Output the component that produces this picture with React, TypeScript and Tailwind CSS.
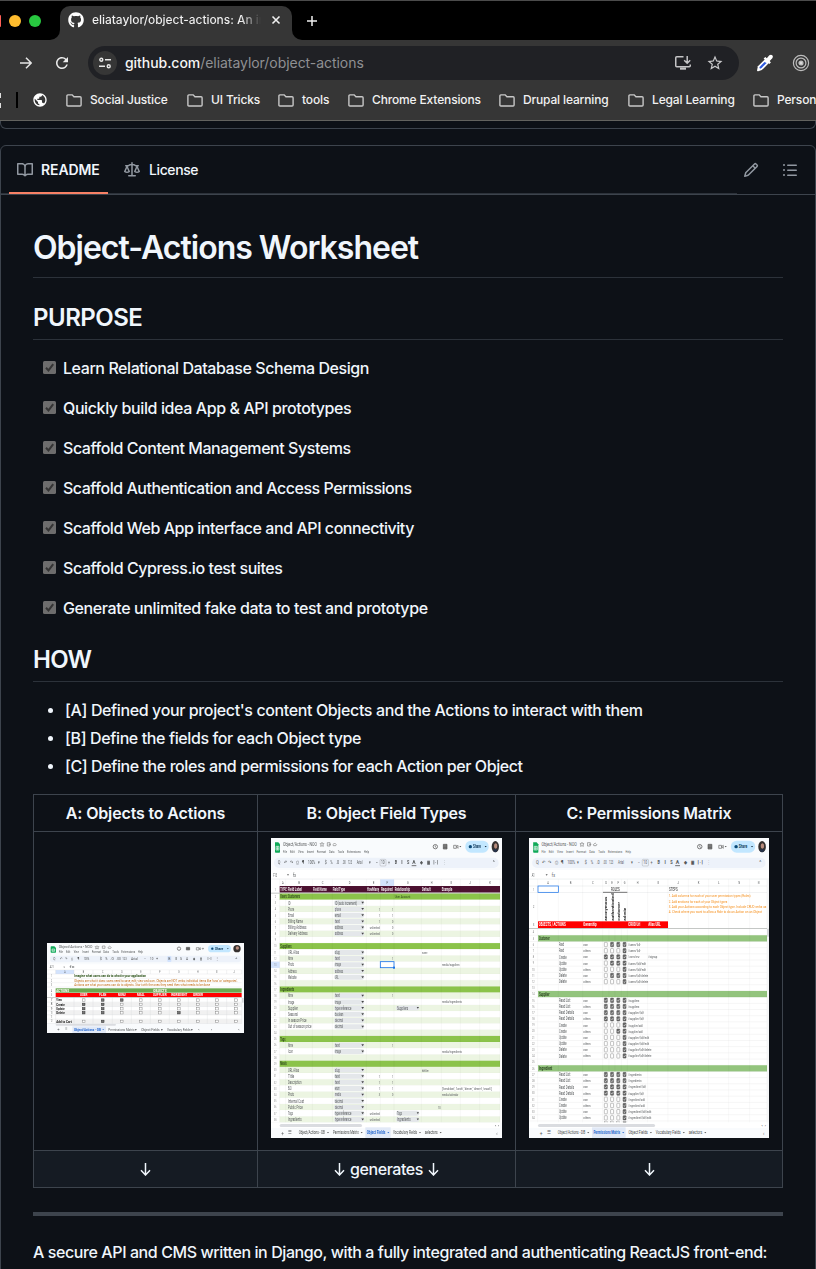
import React from "react";
import { FaGithub } from "react-icons/fa";
import { MdPublic, MdRefresh, MdStarBorder } from "react-icons/md";

/* ---------- Spreadsheet preview drawings ---------- */

type TProps = {
  x: number;
  y: number;
  w: number;
  s?: number;
  fill?: string;
  bold?: boolean;
  children: string;
};

function T({ x, y, w, s = 14, fill = "#55585a", bold, children }: TProps) {
  return (
    <text
      x={x}
      y={y + s * 0.38}
      fontSize={s * 1.08}
      fill={fill}
      fontWeight={bold ? 700 : 400}
      textLength={w}
      lengthAdjust="spacingAndGlyphs"
    >
      {children}
    </text>
  );
}

function SheetHeader() {
  return (
    <g>
      <rect x="18" y="18" width="693" height="124" fill="#f9fbfd" />
      <path d="M30 31h10l5 6v23q0 2-2 2H32q-2 0-2-2V33z" fill="#0fa958" />
      <path d="M33 43h9v11h-9zM33 48.500h9M37.500 43v11" fill="none" stroke="#fff" strokeWidth="1.800" />
      <T x={54} y={36} w={102} s={15}>Object/Actions - NOO</T>
      <path d="M171 31l2 4h4l-3 3 1 5-4-2-4 2 1-5-3-3h4zM187 32h8v10h-8zM191 37h7M205 41q-3-4 1-5 3-6 6 0 4 2 0 5z" fill="none" stroke="#666" strokeWidth="1.600" />
      {[
        ["File", 54, 12], ["Edit", 75, 14], ["View", 99, 17], ["Insert", 125, 22], ["Format", 155, 28],
        ["Data", 192, 16], ["Tools", 218, 19], ["Extensions", 246, 41], ["Help", 297, 15],
      ].map(([t, x, w]) => (
        <T key={t as string} x={x as number} y={58} w={w as number} s={12}>{t as string}</T>
      ))}
      <circle cx="511" cy="44" r="6.500" fill="none" stroke="#666" strokeWidth="2.500" />
      <path d="M511 40v5l3 2" fill="none" stroke="#666" strokeWidth="2" />
      <path d="M535 37h11v14h-11zM535 42h11M535 47h11" fill="#888" stroke="#555" strokeWidth="2" />
      <path d="M566 40h8v9h-8zM574 44l5-4v9z" fill="none" stroke="#666" strokeWidth="2" />
      <path d="M583 42h6l-3 4z" fill="#555" />
      <rect x="601" y="26" width="70" height="36" rx="17" fill="#c2e7ff" />
      <circle cx="616" cy="44" r="5" fill="#0b4a78" />
      <T x={624} y={44} w={24} s={14} fill="#0b3556" bold>Share</T>
      <path d="M659 42h6l-3 4z" fill="#123" />
      <ellipse cx="691" cy="44" rx="11" ry="17" fill="#35302f" />
      <ellipse cx="692" cy="42" rx="5" ry="8" fill="#b78b7b" />
      <path d="M684 54q7-6 14 0-3 7-7 7-5 0-7-7z" fill="#26334a" />
      <rect x="27" y="77" width="674" height="31" rx="15" fill="#edf2fa" />
      {[
        ["Q", 38, 8], ["↶", 57, 9], ["↷", 74, 9], ["⎙", 92, 9], ["¶", 110, 8], ["100%", 129, 22], ["▾", 158, 6],
        ["$", 179, 6], ["%", 196, 7], [".0", 213, 9], [".00", 232, 10], ["123", 249, 12], ["Arial", 275, 17],
        ["▾", 313, 6], ["−", 333, 6], ["10", 348, 11], ["+", 369, 6], ["B", 389, 7], ["I", 409, 4],
        ["S", 426, 7], ["A", 442, 10], ["◆", 465, 9], ["▦", 485, 10], ["|·|", 504, 17], ["⋮", 536, 4], ["^", 683, 6],
      ].map(([t, x, w], i) => (
        <T key={i} x={x as number} y={92} w={w as number} s={14} bold={i > 16 && i < 23}>{t as string}</T>
      ))}
      <rect x="345" y="82" width="18" height="20" rx="3" fill="none" stroke="#8b8f94" />
      <path d="M440 101h14" stroke="#333" strokeWidth="2" />
      <rect x="18" y="114" width="693" height="28" fill="#fff" />
      <path d="M18 141h693" stroke="#d5d8db" />
      <path d="M66 127h6l-3 4z" fill="#555" />
      <T x={84} y={129} w={9} s={14}>fx</T>
    </g>
  );
}

function SheetFooter({ active }: { active: number }) {
  const tabs: [string, number, number][] = [
    ["Object/Actions - DB", 101, 79],
    ["Permissions Matrix", 204, 77],
    ["Object Fields", 305, 56],
    ["Vocabulary Fields", 384, 72],
    ["selectors", 479, 39],
  ];
  return (
    <g>
      <rect x="18" y="872" width="693" height="46" fill="#f9fbfd" />
      <rect x="18" y="872" width="687" height="16" fill="#fff" />
      <rect x="44" y="876" width={active === 2 ? 247 : 338} height="9" rx="4.500" fill="#dadce0" />
      <T x={689} y={880} w={14} s={10}>‹ ›</T>
      <T x={49} y={902} w={8} s={16}>+</T>
      <T x={70} y={902} w={10} s={14}>☰</T>
      {tabs.map(([t, x, w], i) => (
        <g key={t}>
          {i === active && <rect x={x - 4} y="886" width={w + 20} height="32" fill="#e1e9f7" />}
          <T x={x} y={902} w={w} s={14} bold={i === active} fill={i === active ? "#2668cf" : "#444746"}>{t}</T>
          <path d={`M${x + w + 6} 900h6l-3 4z`} fill={i === active ? "#2668cf" : "#555"} />
        </g>
      ))}
      <T x={694} y={904} w={4} s={14}>‹</T>
    </g>
  );
}

const fieldCols = [44, 62, 142, 202, 304, 346, 387, 469, 529, 586, 644, 705];

const fieldRows: Record<number, { n: string; t: string; e?: string; f?: string; g?: string; h?: string; i?: string }> = {
  3: { n: "ID", t: "ID (auto increment)" },
  4: { n: "Phone", t: "phone", e: "1", f: "1" },
  5: { n: "Email", t: "email", e: "1", f: "1" },
  6: { n: "Billing Name", t: "text", e: "1", f: "0" },
  7: { n: "Billing Address", t: "address", e: "unlimited", f: "0" },
  8: { n: "Delivery Address", t: "address", e: "unlimited", f: "0" },
  11: { n: "URL Alias", t: "slug", h: "name" },
  12: { n: "Name", t: "text", f: "1" },
  13: { n: "Photo", t: "image", i: "media/suppliers" },
  14: { n: "Address", t: "address" },
  15: { n: "Website", t: "URL" },
  18: { n: "Name", t: "text", f: "1" },
  19: { n: "Image", t: "image", i: "media/ingredients" },
  20: { n: "Supplier", t: "type reference", g: "Suppliers" },
  21: { n: "Seasonal", t: "boolean" },
  22: { n: "In season Price", t: "decimal" },
  23: { n: "Out of season price", t: "decimal" },
  26: { n: "Name", t: "text", f: "1" },
  27: { n: "Icon", t: "image", i: "media/ingredients" },
  30: { n: "URL Alias", t: "slug", h: "title" },
  31: { n: "Title", t: "text", e: "1", f: "1" },
  32: { n: "Description", t: "text", e: "1", f: "1" },
  33: { n: "BLD", t: "enum", e: "1", f: "1", i: "['breakfast', 'lunch', 'dinner', 'desert', 'snack']" },
  34: { n: "Photo", t: "media", e: "3", f: "0", i: "media/calendar" },
  35: { n: "Internal Cost", t: "decimal" },
  36: { n: "Public Price", t: "decimal", h: "10" },
  37: { n: "Tags", t: "type reference", e: "unlimited", g: "Tags" },
  38: { n: "Ingredients", t: "type reference", e: "unlimited", g: "Ingredients" },
};

const fieldHeads: Record<number, string> = { 2: "Users: Customers", 10: "Suppliers", 17: "Ingredients", 25: "Tags", 29: "Meals" };

function FieldTypesSheet() {
  const cy = (n: number) => 194 + (n - 2) * 18.57;
  const rows = Array.from({ length: 37 }, (_, i) => i + 2);
  return (
    <svg viewBox="18 18 693 900" preserveAspectRatio="none" className="block h-[300px] w-[231px] font-['Roboto',sans-serif] blur-[0.3px]">
      <rect x="18" y="18" width="693" height="900" fill="#fff" />
      <SheetHeader />
      <T x={25} y={129} w={11} s={13}>F13</T>
      <rect x="346" y="142" width="41" height="20" fill="#d3e3fd" />
      {"ABCDEFGHIJK".split("").map((c, i) => (
        <T key={c} x={(fieldCols[i] + fieldCols[i + 1]) / 2 - 2} y={151} w={5} s={12}>{c}</T>
      ))}
      <rect x="44" y="162" width="661" height="20" fill="#4c1130" />
      <T x={29} y={172} w={3} s={11}>1</T>
      {[
        ["TYPE", 46, 19], ["Field Label", 68, 43], ["Field Name", 144, 41], ["Field Type", 203, 37], ["HowMany", 306, 36],
        ["Required", 348, 35], ["Relationship", 389, 46], ["Default", 471, 26], ["Example", 530, 32],
      ].map(([t, x, w]) => (
        <T key={t as string} x={x as number} y={172} w={w as number} s={13} fill="#f2ecef" bold>{t as string}</T>
      ))}
      <rect x="18" y="182" width="687" height="3" fill="#c4c7c5" />
      {rows.map((n) => {
        const y = cy(n);
        const r = fieldRows[n];
        const head = fieldHeads[n];
        return (
          <g key={n}>
            <rect x="44" y={y - 9.3} width="661" height="18.6" fill={head ? "#8bc34a" : n % 2 === 0 ? "#ecf5e2" : "#fff"} />
            {n === 13 && <rect x="18" y={y - 9.3} width="26" height="18.6" fill="#d3e3fd" />}
            <T x={n < 10 ? 29 : 27} y={y} w={n < 10 ? 4 : 7} s={10} fill="#888">{String(n)}</T>
            {head && <T x={46} y={y} w={n === 2 ? 59 : head.length * 3.8} s={13} fill="#2f4a1b" bold>{head}</T>}
            {n === 2 && <T x={389} y={y} w={47} s={12} fill="#2c4a18">User Account</T>}
            {r && (
              <g>
                <T x={69} y={y} w={r.n.length * 3.7} s={13}>{r.n}</T>
                <rect x="207" y={y - 7.5} width="91" height="15" rx="7" fill="#e4e7ea" />
                <T x={210} y={y} w={r.t.length * 3.5} s={13}>{r.t}</T>
                <path d={`M289 ${y - 3}h8l-4 6z`} fill="#444" />
                {r.e && <T x={r.e.length > 1 ? 314 : 341} y={y} w={r.e.length > 1 ? 31 : 4} s={12}>{r.e}</T>}
                {r.f && <T x={381} y={y} w={4} s={12}>{r.f}</T>}
                {r.g && (
                  <g>
                    <rect x="393" y={y - 7.5} width="70" height="15" rx="7" fill="#e4e7ea" />
                    <T x={396} y={y} w={r.g.length * 3.7} s={13}>{r.g}</T>
                    <path d={`M455 ${y - 3}h7l-3.500 5z`} fill="#444" />
                  </g>
                )}
                {r.h && <T x={n === 36 ? 519 : 471} y={y} w={r.h.length * 4} s={12}>{r.h}</T>}
                {r.i && <T x={531} y={y} w={n === 33 ? 149 : r.i.length * 3.5} s={12}>{r.i}</T>}
              </g>
            )}
            <path d={`M18 ${y + 9.3}H705`} stroke="#000" strokeOpacity="0.08" />
          </g>
        );
      })}
      {fieldCols.map((x) => (
        <path key={x} d={`M${x} 142V872`} stroke="#000" strokeOpacity="0.1" />
      ))}
      <rect x="346" y="389" width="41" height="18" fill="#fff" stroke="#1a73e8" strokeWidth="2.500" />
      <rect x="384" y="404" width="6" height="6" fill="#1a73e8" />
      <SheetFooter active={2} />
    </svg>
  );
}

const permCols = [47, 109, 182, 242, 261, 279, 298, 316, 377, 438, 499, 560, 620, 683, 735];

const permRows: Record<number, [string, string, string, string]> = {
  6: ["Read", "own", "0111", "/users/{id}"],
  7: ["Read", "others", "0001", "/users/{id}"],
  8: ["Create", "own", "1111", "/users/new"],
  9: ["Update", "own", "0111", "/users/{id}/edit"],
  10: ["Update", "others", "0001", "/users/{id}/edit"],
  11: ["Delete", "own", "0111", "/users/{id}/delete"],
  12: ["Delete", "others", "0001", "/users/{id}/delete"],
  15: ["Read List", "own", "1111", "/suppliers"],
  16: ["Read List", "others", "1111", "/suppliers"],
  17: ["Read Details", "own", "1111", "/supplier/{id}"],
  18: ["Read Details", "others", "1111", "/supplier/{id}"],
  19: ["Create", "own", "0001", "/supplier/add"],
  20: ["Create", "others", "0011", "/supplier/add"],
  21: ["Update", "own", "0001", "/supplier/{id}/edit"],
  22: ["Update", "others", "0001", "/supplier/{id}/edit"],
  23: ["Delete", "own", "0001", "/supplier/{id}/delete"],
  24: ["Delete", "others", "0001", "/supplier/{id}/delete"],
  27: ["Read List", "own", "1111", "/ingredients"],
  28: ["Read List", "others", "1111", "/ingredients"],
  29: ["Read Details", "own", "1111", "/ingredient/{id}"],
  30: ["Read Details", "others", "1111", "/supplier/{id}"],
  31: ["Create", "own", "0001", "/ingredient/add"],
  32: ["Create", "others", "0001", "/ingredient/add"],
  33: ["Update", "own", "0001", "/ingredient/{id}/edit"],
  34: ["Update", "others", "0001", "/ingredient/{id}/edit"],
};

const permHeads: Record<number, string> = { 5: "Customer", 14: "Supplier", 26: "Ingredient" };

function PermissionsSheet() {
  const cy = (n: number) => 319 + (n - 5) * 18.57;
  const rows = Array.from({ length: 31 }, (_, i) => i + 4);
  return (
    <svg viewBox="21 18 720 900" preserveAspectRatio="none" className="block h-[300px] w-[240px] font-['Roboto',sans-serif] blur-[0.3px]">
      <rect x="21" y="18" width="720" height="900" fill="#fff" />
      <g transform="translate(2.300 0) scale(1.03896 1)">
        <SheetHeader />
      </g>
      <T x={29} y={129} w={9} s={13}>A1</T>
      {permCols.slice(0, -1).map((x, i) => (
        <T key={x} x={(x + permCols[i + 1]) / 2 - 2} y={151} w={5} s={12}>{"ABCDEFGHIJKLMN"[i]}</T>
      ))}
      <path d="M21 162H735M21 181.500H735" stroke="#d9dbdd" />
      <rect x="48" y="268" width="390" height="20" fill="#f00" />
      {[
        ["OBJECTS / ACTIONS", 50, 81], ["Ownership", 184, 40], ["CRUD Url", 319, 36], ["Alias URL", 379, 37],
      ].map(([t, x, w]) => (
        <T key={t as string} x={x as number} y={278} w={w as number} s={13} fill="#fff" bold>{t as string}</T>
      ))}
      <T x={33} y={172} w={3} s={11}>1</T>
      <T x={33} y={224} w={4} s={11}>2</T>
      <T x={33} y={278} w={4} s={11}>3</T>
      <T x={267} y={172} w={26} s={14} fill="#222">ROLES</T>
      <path d="M243 181H316" stroke="#333" strokeWidth="2" />
      {[
        ["anonymous", 251, 72], ["authenticated", 270, 82], ["customer", 289, 56], ["admin", 307, 39],
      ].map(([t, x, w]) => (
        <g key={t as string} transform={`translate(${x} 266) rotate(-90)`}>
          <T x={0} y={0} w={w as number} s={12} fill="#222" bold>{t as string}</T>
        </g>
      ))}
      <T x={441} y={172} w={26} s={13} fill="#333">STEPS</T>
      <T x={440} y={191} w={246} s={12} fill="#f59120">1. Add columns for each of your user permission types (Roles)</T>
      <T x={440} y={207} w={176} s={12} fill="#f59120">2. Add sections for each of your Object types</T>
      <T x={440} y={223} w={293} s={12} fill="#f59120">3. Add your Actions according to each Object type. Include CRUD verbs as</T>
      <T x={440} y={239} w={280} s={12} fill="#f59120">4. Check where you want to allow a Role to do an Action on an Object</T>
      {rows.map((n) => {
        const y = cy(n);
        const r = permRows[n];
        const head = permHeads[n];
        return (
          <g key={n}>
            {head && <rect x="48" y={y - 9.3} width="687" height="18.6" fill="#93c47d" />}
            {head && <T x={51} y={y} w={head.length * 4} s={13} fill="#2b4420" bold>{head}</T>}
            <T x={n < 10 ? 32 : 30} y={y} w={n < 10 ? 4 : 8} s={10} fill="#888">{String(n)}</T>
            {r && (
              <g>
                <T x={111} y={y} w={r[0].length * 3.8} s={13}>{r[0]}</T>
                <T x={184} y={y} w={r[1].length === 3 ? 14 : 22} s={12}>{r[1]}</T>
                {r[2].split("").map((c, i) => (
                  <g key={i}>
                    <rect x={247 + i * 18.7} y={y - 6.5} width="9" height="13" rx="1.500" fill={c === "1" ? "#666" : "#fff"} stroke={c === "1" ? "#555" : "#888"} strokeWidth="1.500" />
                    {c === "1" && <path d={`M249 ${y}l2 3 4-6`} transform={`translate(${i * 18.7} 0)`} fill="none" stroke="#fff" strokeWidth="1.500" />}
                  </g>
                ))}
                <T x={319} y={y} w={r[3].length * 3.3} s={12}>{r[3]}</T>
                {n === 8 && <T x={379} y={y} w={27} s={12}>/signup</T>}
              </g>
            )}
            <path d={`M21 ${y + 9.3}H735`} stroke="#000" strokeOpacity="0.12" />
          </g>
        );
      })}
      {[0, 1, 2, 3].map((i) => (
        <rect key={i} x={247 + i * 18.7} y="869" width="9" height="4" fill={i === 3 ? "#666" : "#fff"} stroke="#888" />
      ))}
      {permCols.map((x) => (
        <path key={x} d={x > 242 && x < 316 ? `M${x} 142V161M${x} 290V872` : `M${x} 142V872`} stroke="#000" strokeOpacity="0.1" />
      ))}
      <rect x="21" y="288" width="714" height="3" fill="#c4c7c5" />
      <rect x="48" y="162" width="61" height="19" fill="#fff" stroke="#1a73e8" strokeWidth="2.200" />
      <rect x="735" y="142" width="6" height="730" fill="#f5f6f7" />
      <rect x="735" y="290" width="6" height="24" fill="#d5d7da" />
      <g transform="translate(2.300 0) scale(1.03896 1)">
        <SheetFooter active={1} />
      </g>
    </svg>
  );
}

function ActionsSheet() {
  const cols = [47, 102, 159, 217, 274, 331, 388, 445, 502, 560, 605];
  const rows: [string, number, string][] = [
    ["View", 195, "011000000"],
    ["Create", 208, "110000000"],
    ["Update", 221, "110000000"],
    ["Delete", 233, "110001000"],
    ["", 246, ""],
    ["Add to Cart", 259, "010000000"],
  ];
  return (
    <svg viewBox="21 24 591 270" preserveAspectRatio="none" className="block h-[90px] w-[197px] font-['Roboto',sans-serif] blur-[0.3px]">
      <rect x="21" y="24" width="591" height="270" fill="#f9fbfd" />
      <path d="M34 34h9l5 5v12q0 2-2 2H34q-2 0-2-2V36q0-2 2-2z" fill="#0fa958" />
      <path d="M36 42h8v7h-8zM36 45.500h8" fill="none" stroke="#fff" strokeWidth="1.600" />
      <T x={56} y={36} w={101} s={11}>Object/Actions - NOO</T>
      <path d="M171 32l2 3h4l-3 3 1 4-4-2-4 2 1-4-3-3h4zM187 33h8v7h-8zM205 40q-3-3 1-4 3-5 6 0 4 1 0 4z" fill="none" stroke="#666" strokeWidth="1.500" />
      {[
        ["File", 56, 13], ["Edit", 78, 13], ["View", 101, 16], ["Insert", 127, 20], ["Format", 155, 28],
        ["Data", 190, 17], ["Tools", 217, 20], ["Extensions", 244, 42], ["Help", 294, 15],
      ].map(([t, x, w]) => (
        <T key={t as string} x={x as number} y={49.5} w={w as number} s={8.5}>{t as string}</T>
      ))}
      <circle cx="417" cy="41" r="5" fill="none" stroke="#555" strokeWidth="2" />
      <path d="M439 37h10v8h-10zM439 41h10" fill="#777" stroke="#444" strokeWidth="1.500" />
      <path d="M469 38h8v7h-8zM477 41l4-3v7zM486 40h5l-2.500 3z" fill="none" stroke="#555" strokeWidth="1.500" />
      <rect x="504" y="30" width="69" height="22" rx="11" fill="#c2e7ff" />
      <circle cx="517" cy="41" r="3.500" fill="#0b4a78" />
      <T x={525} y={41} w={25} s={10} fill="#0b3556" bold>Share</T>
      <path d="M561 40h5l-2.500 3z" fill="#123" />
      <circle cx="591" cy="41" r="11" fill="#35302f" />
      <circle cx="592" cy="39" r="5" fill="#b78b7b" />
      <rect x="30" y="62" width="573" height="20" rx="10" fill="#edf2fa" />
      <rect x="382" y="63" width="12" height="18" rx="3" fill="#d3e3fd" />
      {[
        ["Q", 40], ["↶", 60], ["↷", 76], ["⎙", 94], ["¶", 112], ["100%", 131], ["$", 179], ["%", 196], [".0", 211], [".00", 229],
        ["123", 247], ["Arial", 273], ["−", 311], ["10", 330], ["+", 348], ["B", 385], ["I", 405], ["S", 420], ["A", 438],
        ["◆", 459], ["▦", 479], ["|·|", 502], ["⋮", 529], ["^", 586],
      ].map(([t, x], i) => (
        <T key={i} x={x as number} y={72} w={(t as string).length * 3.5 + 3} s={10}>{t as string}</T>
      ))}
      <rect x="21" y="88" width="585" height="178" fill="#fff" />
      <T x={29} y={96} w={12} s={8}>A21</T>
      <path d="M70 95h5l-2.500 3z" fill="#555" />
      <T x={88} y={96} w={16} s={8}>fx</T>
      <rect x="47" y="105" width="55" height="12" fill="#d3e3fd" />
      {cols.slice(0, -1).map((x, i) => (
        <T key={x} x={(x + cols[i + 1]) / 2 - 2} y={111} w={4} s={8}>{"ABCDEFGHIJ"[i]}</T>
      ))}
      <path d="M21 104.500H605M21 117H605M21 130H605M21 143H605M21 156H605" stroke="#dddfe1" />
      <T x={33} y={124} w={3} s={8}>1</T>
      <T x={33} y={137} w={3} s={8}>2</T>
      <T x={33} y={150} w={3} s={8}>3</T>
      <T x={103} y={124} w={215} s={9} fill="#274e13" bold>Imagine what users can do to what in your application</T>
      <T x={103} y={137} w={490} s={9} fill="#c06a16">Objects are what it does: users need to save, edit, view and own. Objects are NOT verbs; individual items like 'tuna' or 'categories'.</T>
      <T x={103} y={150} w={407} s={9} fill="#c06a16">Actions are what your users can do to objects. Start with the ones they need then what needs to be done</T>
      <rect x="47" y="160" width="558" height="13" fill="#6aa84f" />
      <rect x="47" y="174" width="558" height="12" fill="#f00" />
      <T x={49} y={166.5} w={38} s={10} fill="#fff" bold>ACTIONS</T>
      <T x={340} y={166.5} w={40} s={10} fill="#fff" bold>OBJECTS</T>
      {[
        ["USER", 120, 22], ["PLAN", 177, 22], ["MENU", 234, 23], ["MEAL", 291, 23], ["SUPPLIER", 339, 41],
        ["INGREDIENT", 393, 49], ["ORDER", 459, 30],
      ].map(([t, x, w]) => (
        <T key={t as string} x={x as number} y={180} w={w as number} s={9} fill="#fff" bold>{t as string}</T>
      ))}
      <T x={33} y={167} w={3} s={8}>4</T>
      <T x={33} y={180} w={3} s={8}>5</T>
      {rows.map(([name, y, marks], r) => (
        <g key={r}>
          {r % 2 === 1 && <rect x="47" y={y - 6.4} width="558" height="12.8" fill="#f1f1f1" />}
          <T x={32} y={y} w={5} s={8}>{String(r + 7)}</T>
          {name && <T x={49} y={y} w={name.length * 4.2} s={10} fill="#111" bold>{name}</T>}
          {marks.split("").map((c, i) => (
            <rect key={i} x={127 + i * 57.1} y={y - 3.5} width="8" height="7.5" fill={c === "1" ? "#777" : "#fff"} stroke={c === "1" ? "#333" : "#888"} strokeWidth="1.5" />
          ))}
          <path d={`M21 ${y + 6.4}H605`} stroke="#d9dbdd" />
        </g>
      ))}
      {cols.map((x) => (
        <path key={x} d={`M${x} 105V117M${x} 187V266`} stroke="#d5d7da" />
      ))}
      <rect x="21" y="186.500" width="585" height="2.500" fill="#c4c7c5" />
      <rect x="606" y="189" width="5" height="14" fill="#d5d7da" />
      <rect x="47" y="267" width="181" height="5" rx="2.500" fill="#dadce0" />
      <rect x="97" y="274" width="101" height="20" fill="#e1e9f7" />
      <T x={52} y={283} w={7} s={10}>+</T>
      <T x={75} y={283} w={8} s={9}>☰</T>
      <T x={102} y={283} w={81} s={10} fill="#2668cf" bold>Object/Actions - DB</T>
      <path d="M187 282h5l-2.500 3z" fill="#2668cf" />
      <T x={205} y={283} w={86} s={10}>Permissions Matrix ▾</T>
      <T x={304} y={283} w={63} s={10}>Object Fields ▾</T>
      <T x={381} y={283} w={78} s={10}>Vocabulary Fields ▾</T>
      <T x={474} y={283} w={5} s={10}>‹</T>
      <T x={512} y={283} w={5} s={10}>›</T>
      <T x={594} y={283} w={5} s={10}>‹</T>
    </svg>
  );
}

/* ---------- Icons ---------- */

const glyphs = {
  book: "M0 1.75A.75.75 0 0 1 .75 1h4.253c1.227 0 2.317.59 3 1.501A3.743 3.743 0 0 1 11.006 1h4.245a.75.75 0 0 1 .75.75v10.5a.75.75 0 0 1-.75.75h-4.507a2.25 2.25 0 0 0-1.591.659l-.622.621a.75.75 0 0 1-1.06 0l-.622-.621A2.25 2.25 0 0 0 5.258 13H.75a.75.75 0 0 1-.75-.75Zm7.251 10.324.004-5.073-.002-2.253A2.25 2.25 0 0 0 5.003 2.5H1.5v9h3.757a3.75 3.75 0 0 1 1.994.574ZM8.755 4.75l-.004 7.322a3.752 3.752 0 0 1 1.992-.572H14.5v-9h-3.495a2.25 2.25 0 0 0-2.25 2.25Z",
  law: "M8.75.75V2h.985c.304 0 .603.08.867.231l1.29.736c.038.022.08.033.124.033h2.234a.75.75 0 0 1 0 1.5h-.427l2.111 4.692a.75.75 0 0 1-.154.838l-.53-.53.529.531-.001.002-.002.002-.006.006-.006.005-.01.01-.045.04c-.21.176-.441.327-.686.45C14.556 10.78 13.88 11 13 11a4.498 4.498 0 0 1-2.023-.454 3.544 3.544 0 0 1-.686-.45l-.045-.04-.016-.015-.006-.006-.004-.004v-.001a.75.75 0 0 1-.154-.838L12.178 4.5h-.162c-.305 0-.604-.079-.868-.231l-1.29-.736a.245.245 0 0 0-.124-.033H8.75V13h2.5a.75.75 0 0 1 0 1.5h-6.5a.75.75 0 0 1 0-1.5h2.5V3.5h-.984a.245.245 0 0 0-.124.033l-1.289.737c-.265.15-.564.23-.869.23h-.162l2.112 4.692a.75.75 0 0 1-.154.838l-.53-.53.529.531-.001.002-.002.002-.006.006-.016.015-.045.04c-.21.176-.441.327-.686.45C4.556 10.78 3.88 11 3 11a4.498 4.498 0 0 1-2.023-.454 3.544 3.544 0 0 1-.686-.45l-.045-.04-.016-.015-.006-.006-.004-.004v-.001a.75.75 0 0 1-.154-.838L2.178 4.5H1.75a.75.75 0 0 1 0-1.5h2.234a.249.249 0 0 0 .125-.033l1.288-.737c.265-.15.564-.23.869-.23h.984V.75a.75.75 0 0 1 1.5 0Zm2.945 8.477c.285.135.718.273 1.305.273s1.02-.138 1.305-.273L13 6.327Zm-10 0c.285.135.718.273 1.305.273s1.02-.138 1.305-.273L3 6.327Z",
  pencil: "M11.013 1.427a1.75 1.75 0 0 1 2.474 0l1.086 1.086a1.75 1.75 0 0 1 0 2.474l-8.61 8.61c-.21.21-.47.364-.756.445l-3.251.93a.75.75 0 0 1-.927-.928l.929-3.25c.081-.286.235-.547.445-.758l8.61-8.61Zm.176 4.823L9.75 4.81l-6.286 6.287a.253.253 0 0 0-.064.108l-.558 1.953 1.953-.558a.253.253 0 0 0 .108-.064Zm1.238-3.763a.25.25 0 0 0-.354 0L10.811 3.75l1.439 1.44 1.263-1.263a.25.25 0 0 0 0-.354Z",
  list: "M5.75 2.5h8.5a.75.75 0 0 1 0 1.5h-8.5a.75.75 0 0 1 0-1.5Zm0 5h8.5a.75.75 0 0 1 0 1.5h-8.5a.75.75 0 0 1 0-1.5Zm0 5h8.5a.75.75 0 0 1 0 1.5h-8.5a.75.75 0 0 1 0-1.5ZM2 14a1 1 0 1 1 0-2 1 1 0 0 1 0 2Zm1-6a1 1 0 1 1-2 0 1 1 0 0 1 2 0ZM2 4a1 1 0 1 1 0-2 1 1 0 0 1 0 2Z",
};

function Icon({ name, className = "" }: { name: keyof typeof glyphs; className?: string }) {
  return (
    <svg viewBox="0 0 16 16" fill="currentColor" className={`size-4 shrink-0 text-[#9198a1] ${className}`}>
      <path d={glyphs[name]} />
    </svg>
  );
}

/* ---------- Browser chrome ---------- */

function FolderIcon() {
  return (
    <svg viewBox="0 0 16 13" className="h-[13px] w-4 shrink-0" fill="none" stroke="#c7c7c7" strokeWidth="1.4">
      <path d="M1.900.900h4.300l1.700 1.900h6.200q1 0 1 1v7.200q0 1-1 1H1.900q-1 0-1-1V1.900q0-1 1-1z" />
    </svg>
  );
}

const bookmarks: { name: string; box: string }[] = [
  { name: "Social Justice", box: "w-[121px]" },
  { name: "UI Tricks", box: "w-[91px]" },
  { name: "tools", box: "w-[70px]" },
  { name: "Chrome Extensions", box: "w-[151px]" },
  { name: "Drupal learning", box: "w-[129px]" },
  { name: "Legal Learning", box: "w-[125px]" },
  { name: "Person", box: "w-[63px]" },
];

function TabStrip() {
  return (
    <div className="flex h-10 bg-[#363636]">
      <div className="flex w-[60px] items-center rounded-br-[10px] border-t border-[#4b4b4b] bg-black">
        <span className="h-3 w-px rounded-r-full bg-[#ff5f57]" />
        <span className="ml-2 size-3 rounded-full bg-[#febc2e]" />
        <span className="ml-2 size-3 rounded-full bg-[#28c840]" />
      </div>
      <div className="w-[232px] border-t border-[#4b4b4b] bg-black pt-[5px]">
        <div className="flex h-[34px] items-center rounded-t-[10px] bg-[#363636] pb-[6px] pl-2">
          <FaGithub className="size-4 shrink-0 text-white" />
          <span className="ml-2 w-[169px] overflow-hidden whitespace-nowrap bg-gradient-to-r from-[#f2f2f2] from-[88%] to-transparent bg-clip-text text-[12px] font-medium leading-4 tracking-[-0.05px] text-transparent">
            eliataylor/object-actions: An in
          </span>
          <svg viewBox="0 0 10 10" className="ml-[10px] size-[10px]" stroke="#f0f0f0" strokeWidth="1.6">
            <path d="M1.500 1.500l7 7M8.500 1.500l-7 7" />
          </svg>
        </div>
      </div>
      <div className="flex flex-1 items-center rounded-bl-[10px] border-t border-[#4b4b4b] bg-black pl-[15px]">
        <svg viewBox="0 0 10 10" className="size-[10px]" stroke="#f0f0f0" strokeWidth="1.5">
          <path d="M5 0v10M0 5h10" />
        </svg>
      </div>
    </div>
  );
}

function AddressRow() {
  return (
    <div className="flex h-[46px] items-center">
      <svg viewBox="0 0 12 12" className="ml-5 size-3" fill="none" stroke="#e6e6e6" strokeWidth="1.5">
        <path d="M0 6h11M6 .800L11.200 6 6 11.200" />
      </svg>
      <MdRefresh className="ml-[21px] size-[18px] text-[#ececec]" />
      <div className="ml-[17px] flex h-[34px] w-[651px] items-center rounded-full bg-[#202125] pl-[5px]">
        <div className="flex size-6 items-center justify-center rounded-full bg-[#363636]">
          <svg viewBox="0 0 12 12" className="size-3" fill="none" stroke="#e8e8e8" strokeWidth="1.4">
            <circle cx="2.300" cy="2.700" r="1.500" />
            <path d="M6 2.700h6M0 9.300h6" />
            <circle cx="9.700" cy="9.300" r="1.500" />
          </svg>
        </div>
        <span className="ml-2 flex-1 whitespace-nowrap text-[14px] leading-5 tracking-[-0.05px] text-[#8f9093]">
          <span className="font-[450] text-[#f4f4f4]">github.com</span>/eliataylor/object-actions
        </span>
        <svg viewBox="0 0 18 16" className="mr-[14px] h-4 w-[18px]" fill="none" stroke="#c4c4c6" strokeWidth="1.5">
          <path d="M9.500 1.750H2.750q-1 0-1 1v8q0 1 1 1h12.500q1 0 1-1V9.500M13.200 1v7M10.200 5.300l3 3 3-3" />
          <path d="M6 13.600h6" strokeWidth="2.200" />
        </svg>
        <MdStarBorder className="mr-[15px] size-[18px] text-[#c9c9cb]" />
      </div>
      <svg viewBox="0 0 18 18" className="ml-[17px] size-[18px]">
        <path d="M9.200 5L1.900 12.300 1 16.600q.200 1 1.200.700l3.600-1.200L13.200 8.800z" fill="#fff" />
        <path d="M8.500 8L3.300 13.300l.700 1.400L5.600 14l5-5z" fill="#2f5be0" />
        <path d="M7.600 4.600l1.700-1.500 1.500 1.200 2.500-3q1.700-1.300 3 0 1.300 1.500 0 3l-2.600 2.600 1.200 1.600-1.600 1.600z" fill="#fff" />
      </svg>
      <svg viewBox="0 0 18 18" className="ml-[18px] size-[18px] shrink-0" fill="none" stroke="#bdbdbd" strokeWidth="1.2">
        <circle cx="9" cy="9" r="7.600" />
        <circle cx="9" cy="9" r="4.900" />
        <circle cx="9" cy="9" r="2" fill="#d8d8d8" />
      </svg>
    </div>
  );
}

function BookmarkRow() {
  return (
    <div className="flex h-[34px] items-center overflow-hidden pb-[6px]">
      <div className="flex w-4 shrink-0 flex-col gap-[5px]">
        <span className="h-[5px] w-px bg-[#e0e0e0]" />
        <span className="h-[5px] w-px bg-[#e0e0e0]" />
      </div>
      <span className="h-4 w-[2px] shrink-0 bg-black" />
      <MdPublic className="ml-[14px] mr-[18px] size-4 shrink-0 text-white" />
      {bookmarks.map((b) => (
        <div key={b.name} className={`flex shrink-0 items-center gap-2 ${b.box}`}>
          <FolderIcon />
          <span className="whitespace-nowrap text-[12px] font-medium leading-4 tracking-[-0.15px] text-[#f1f1f1]">{b.name}</span>
        </div>
      ))}
    </div>
  );
}

/* ---------- Repository page ---------- */

const goals: { text: string; track: string }[] = [
  { text: "Learn Relational Database Schema Design", track: "tracking-[-0.43px]" },
  { text: "Quickly build idea App & API prototypes", track: "tracking-[-0.4px]" },
  { text: "Scaffold Content Management Systems", track: "tracking-[-0.44px]" },
  { text: "Scaffold Authentication and Access Permissions", track: "tracking-[-0.48px]" },
  { text: "Scaffold Web App interface and API connectivity", track: "tracking-[-0.45px]" },
  { text: "Scaffold Cypress.io test suites", track: "tracking-[-0.42px]" },
  { text: "Generate unlimited fake data to test and prototype", track: "tracking-[-0.38px]" },
];

const steps: { text: string; track: string }[] = [
  { text: "[A] Defined your project's content Objects and the Actions to interact with them", track: "tracking-[-0.38px]" },
  { text: "[B] Define the fields for each Object type", track: "tracking-[-0.39px]" },
  { text: "[C] Define the roles and permissions for each Action per Object", track: "tracking-[-0.42px]" },
];

function CheckedBox() {
  return (
    <svg viewBox="0 0 13 13" className="mt-[-2px] size-[13px] shrink-0">
      <rect width="13" height="13" rx="1.500" fill="#6d6d6d" />
      <path d="M3 6.700l2.500 2.700 4.700-6.200" fill="none" stroke="#343434" strokeWidth="2" />
    </svg>
  );
}

function DownArrow() {
  return (
    <svg viewBox="0 0 11 13" className="h-[13px] w-[11px]" fill="none" stroke="#f0f6fc" strokeWidth="1.5">
      <path d="M5.500 0v12M1 7.300l4.500 4.700L10 7.300" />
    </svg>
  );
}

export default function App() {
  return (
    <div className="h-[1269px] w-[816px] overflow-hidden bg-[#0d1117] font-['Inter','Liberation_Sans',sans-serif] text-[#f0f6fc]">
      <header className="h-[121px] border-b border-[#63635f] bg-[#363636]">
        <TabStrip />
        <AddressRow />
        <BookmarkRow />
      </header>

      <div className="h-2 rounded-b-md border border-t-0 border-[#3d444d]" />

      <section className="mt-4 h-[1140px] rounded-t-md border border-[#3d444d]">
        <div className="flex h-[49px] border-b border-[#3d444d]">
          <nav className="flex w-[736px] items-stretch border-b border-[#2c323a] pl-2">
            <div className="mb-[-1px] flex w-[99px] items-center border-b-2 border-[#f78166] pl-2 pt-px">
              <Icon name="book" />
              <span className="ml-2 mt-px text-[14px] font-semibold leading-5 tracking-[-0.1px]">README</span>
            </div>
            <div className="flex items-center pl-4">
              <Icon name="law" />
              <span className="ml-[9px] text-[14px] font-[450] leading-5 tracking-[-0.4px]">License</span>
            </div>
          </nav>
          <div className="flex flex-1 items-center pl-[6px]">
            <Icon name="pencil" />
            <Icon name="list" className="ml-[23px]" />
          </div>
        </div>

        <article className="px-8 pt-8 text-[16px] font-[450] leading-6">
          <h1 className="h-[51px] whitespace-nowrap border-b border-[#2c323a] pt-px text-[32px] font-semibold leading-10 tracking-[-1px]">
            Object-Actions Worksheet
          </h1>
          <h2 className="mt-6 h-[38px] border-b border-[#2c323a] pt-px text-[24px] font-semibold leading-[30px] tracking-[-0.5px]">PURPOSE</h2>

          <ul className="mt-2 flex flex-col">
            {goals.map((g) => (
              <li key={g.text} className="flex h-10 items-center pl-[10px]">
                <CheckedBox />
                <span className={`ml-[7px] whitespace-nowrap ${g.track}`}>{g.text}</span>
              </li>
            ))}
          </ul>

          <h2 className="mt-4 h-[38px] border-b border-[#2c323a] pt-px text-[24px] font-semibold leading-[30px] tracking-[-0.7px]">HOW</h2>

          <ul className="mt-[14px] flex flex-col">
            {steps.map((s) => (
              <li key={s.text} className="flex h-7 items-center pl-[15px]">
                <span className="size-[5px] rounded-full bg-[#f0f6fc]" />
                <span className={`ml-3 whitespace-nowrap ${s.track}`}>{s.text}</span>
              </li>
            ))}
          </ul>

          <div className="mt-[14px] grid w-[750px] grid-cols-[224px_258px_267px] border-l border-t border-[#3d444d] text-center [&>div]:flex [&>div]:items-center [&>div]:justify-center [&>div]:border-b [&>div]:border-r [&>div]:border-[#3d444d]">
            <div className="h-[37px] font-semibold tracking-[-0.15px]">A: Objects to Actions</div>
            <div className="h-[37px] font-semibold tracking-[-0.15px]">B: Object Field Types</div>
            <div className="h-[37px] font-semibold tracking-[-0.2px]">C: Permissions Matrix</div>
            <div className="h-[319px] pb-[6px]">
              <ActionsSheet />
            </div>
            <div className="h-[319px] pb-[6px]">
              <FieldTypesSheet />
            </div>
            <div className="h-[319px] pb-[6px]">
              <PermissionsSheet />
            </div>
            <div className="h-[37px] bg-[#151b23]">
              <DownArrow />
            </div>
            <div className="h-[37px] gap-[5px] bg-[#151b23] tracking-[-0.45px]">
              <DownArrow />
              generates
              <DownArrow />
            </div>
            <div className="h-[37px] bg-[#151b23]">
              <DownArrow />
            </div>
          </div>

          <div className="mt-6 h-1 w-[750px] bg-[#3d444d]" />
          <p className="mt-6 whitespace-nowrap tracking-[-0.41px]">
            A secure API and CMS written in Django, with a fully integrated and authenticating ReactJS front-end:
          </p>
        </article>
      </section>
    </div>
  );
}
